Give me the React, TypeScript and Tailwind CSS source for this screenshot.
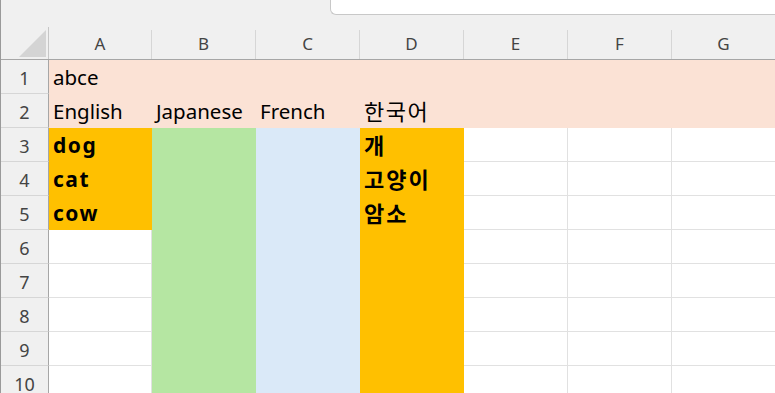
import React from 'react';

const cols = ['A', 'B', 'C', 'D', 'E', 'F', 'G'];

type Cell = { text?: string; bold?: boolean; ko?: boolean; fill?: string };

const PINK = 'bg-[#fbe2d5]';
const ORANGE = 'bg-[#ffc000]';
const GREEN = 'bg-[#b5e6a2]';
const BLUE = 'bg-[#dae9f8]';

const buildRows = (): Cell[][] => {
  const rows: Cell[][] = [];
  for (let r = 1; r <= 10; r++) {
    const row: Cell[] = cols.map(() => ({}));
    if (r <= 2) {
      row.forEach((c) => (c.fill = PINK));
    } else {
      row[0].fill = r <= 5 ? ORANGE : undefined;
      row[1].fill = GREEN;
      row[2].fill = BLUE;
      row[3].fill = ORANGE;
    }
    rows.push(row);
  }
  rows[0][0].text = 'abce';
  rows[1][0].text = 'English';
  rows[1][1].text = 'Japanese';
  rows[1][2].text = 'French';
  rows[1][3] = { ...rows[1][3], text: '한국어', ko: true };
  ['dog', 'cat', 'cow'].forEach((t, i) => {
    rows[2 + i][0] = { ...rows[2 + i][0], text: t, bold: true };
  });
  ['개', '고양이', '암소'].forEach((t, i) => {
    rows[2 + i][3] = { ...rows[2 + i][3], text: t, bold: true, ko: true };
  });
  return rows;
};

const textClass = (cell: Cell) => {
  if (cell.ko && cell.bold) return 'text-[22px] font-bold tracking-[2px]';
  if (cell.ko) return 'text-[22px] tracking-[1.5px]';
  if (cell.bold) return 'text-[21px] font-bold tracking-[1.5px]';
  return 'text-[20.5px]';
};

const CellBox = ({ cell }: { cell: Cell }) => {
  const filled = !!cell.fill;
  return (
    <div
      className={`h-[34px] flex items-end pl-[4px] pb-[4px] whitespace-nowrap ${
        filled ? cell.fill : 'bg-white border-b border-r border-[#e1e1e1]'
      }`}
    >
      {cell.text && (
        <span className={`leading-[26px] text-black ${textClass(cell)}`}>{cell.text}</span>
      )}
    </div>
  );
};

export default function App() {
  const rows = buildRows();
  return (
    <div
      className="w-[775px] h-[393px] overflow-hidden bg-[#f0f0f0] border-l border-[#9a9a9a]"
      style={{ fontFamily: "'Noto Sans','Noto Sans CJK KR',sans-serif" }}
    >
      {/* formula bar remnant */}
      <div className="flex h-[27px]">
        <div className="w-[329px]" />
        <div className="flex-1 h-[15px] bg-white border-l border-b border-[#c8c8c8] rounded-bl-[6px]" />
      </div>

      {/* column headers */}
      <div className="grid grid-cols-[48px_103px_repeat(6,104px)] h-[33px] border-b border-[#a6a6a6]">
        <div className="relative border-r border-[#c6c6c6]">
          <svg className="absolute left-[18px] top-[3px]" width="27" height="27" viewBox="0 0 27 27">
            <polygon points="27,0 27,27 0,27" fill="#d4d4d4" />
          </svg>
        </div>
        {cols.map((c) => (
          <div key={c} className="flex items-end justify-center pb-[2px] border-r border-[#d6d6d6] mt-[3px]">
            <span className="text-[17px] leading-[26px] text-[#444]">{c}</span>
          </div>
        ))}
      </div>

      {/* rows */}
      {rows.map((row, i) => (
        <div key={i} className="grid grid-cols-[48px_103px_repeat(6,104px)]">
          <div className="h-[34px] flex items-end justify-center pb-[2px] border-r border-b border-r-[#a6a6a6] border-b-[#d6d6d6]">
            <span className="text-[18px] leading-[26px] text-[#444]">{i + 1}</span>
          </div>
          {row.map((cell, j) => (
            <CellBox key={j} cell={cell} />
          ))}
        </div>
      ))}
    </div>
  );
}
